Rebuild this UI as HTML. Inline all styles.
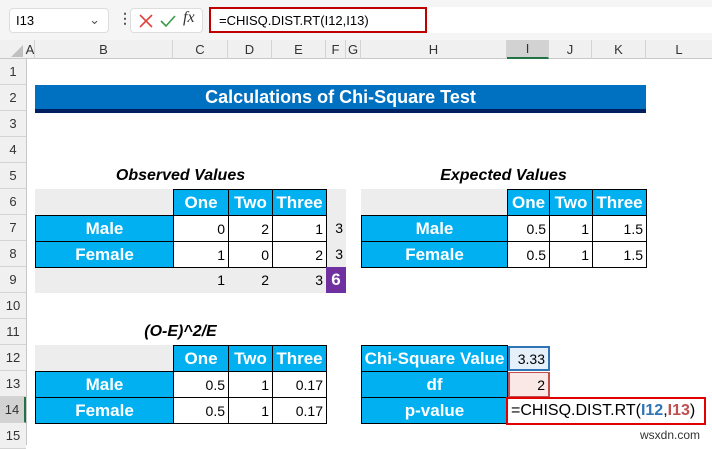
<!DOCTYPE html>
<html><head><meta charset="utf-8"><style>
*{margin:0;padding:0;box-sizing:border-box}
body{width:712px;height:445px;overflow:hidden;background:#fff;font-family:"Liberation Sans",Arial,sans-serif;position:relative}
.a{position:absolute}
.c{position:absolute;display:flex;align-items:center;font-size:14px;color:#000;white-space:nowrap}
.r{justify-content:flex-end;padding-right:3px}
.m{justify-content:center}
.bl{background:#00b0f0;color:#fff;font-weight:bold;font-size:17px}
.bd{border:1px solid #000}
.g{background:#ededed}
.hd{position:absolute;top:40px;height:19px;display:flex;align-items:center;justify-content:center;font-size:13px;color:#333;border-right:1px solid #d4d4d4}
.rh{position:absolute;left:0;width:26px;display:flex;align-items:center;justify-content:center;font-size:13px;color:#333;border-bottom:1px solid #d4d4d4;background:#f0f0f0}
.t{font-weight:bold;font-style:italic;font-size:16px;justify-content:center}
</style></head><body>
<div class="a" style="left:0;top:0;width:712px;height:40px;background:#f5f5f5"></div>
<div class="a" style="left:9px;top:8px;width:100px;height:25px;background:#fff;border:1px solid #ddd;border-radius:4px;font-size:13px;padding:4px 6px">I13<span style="position:absolute;right:8px;top:3px;color:#555">&#8964;</span></div>
<div class="a" style="left:118px;top:10px;font-size:14px;color:#555;font-weight:bold">&#8942;</div>
<div class="a" style="left:130px;top:8px;width:73px;height:25px;background:#fff;border:1px solid #ddd;border-radius:4px"></div>
<svg class="a" style="left:138px;top:13px" width="16" height="16"><path d="M2 2L14 14M14 2L2 14" stroke="#e0443e" stroke-width="1.6"/></svg>
<svg class="a" style="left:160px;top:13px" width="16" height="16"><path d="M1 8L6 13L15 3" stroke="#3a9a4a" stroke-width="1.6" fill="none"/></svg>
<div class="a" style="left:183px;top:9px;font-family:'Liberation Serif',serif;font-style:italic;font-size:16px;color:#333">fx</div>
<div class="a" style="left:209px;top:7px;width:503px;height:26px;background:#fff"></div>
<div class="a" style="left:209px;top:7px;width:218px;height:26px;border:2px solid #c00000;font-size:13px;padding:4px 8px">=CHISQ.DIST.RT(I12,I13)</div>
<div class="a" style="left:0;top:40px;width:712px;height:19px;background:#f0f0f0;border-bottom:1px solid #c8c8c8"></div>
<svg class="a" style="left:10px;top:44px" width="14" height="14"><path d="M13 1L13 13L1 13Z" fill="#c0c0c0"/></svg>
<div class="hd" style="left:26px;width:9px">A</div>
<div class="hd" style="left:35px;width:138px">B</div>
<div class="hd" style="left:173px;width:55px">C</div>
<div class="hd" style="left:228px;width:44px">D</div>
<div class="hd" style="left:272px;width:54px">E</div>
<div class="hd" style="left:326px;width:20px">F</div>
<div class="hd" style="left:346px;width:15px">G</div>
<div class="hd" style="left:361px;width:146px">H</div>
<div class="hd" style="left:507px;width:42px;background:#d2d2d2;border-bottom:2px solid #217346;height:19px">I</div>
<div class="hd" style="left:549px;width:43px">J</div>
<div class="hd" style="left:592px;width:54px">K</div>
<div class="hd" style="left:646px;width:66px;border-right:none">L</div>
<div class="a" style="left:26px;top:59px;width:1px;height:386px;background:#c8c8c8"></div>
<div class="rh" style="top:59px;height:26px">1</div><div class="rh" style="top:85px;height:26px">2</div><div class="rh" style="top:111px;height:26px">3</div><div class="rh" style="top:137px;height:26px">4</div><div class="rh" style="top:163px;height:26px">5</div><div class="rh" style="top:189px;height:26px">6</div><div class="rh" style="top:215px;height:26px">7</div><div class="rh" style="top:241px;height:26px">8</div><div class="rh" style="top:267px;height:26px">9</div><div class="rh" style="top:293px;height:26px">10</div><div class="rh" style="top:319px;height:26px">11</div><div class="rh" style="top:345px;height:26px">12</div><div class="rh" style="top:371px;height:26px">13</div><div class="rh" style="top:397px;height:26px;background:#d2d2d2;border-right:2px solid #217346">14</div><div class="rh" style="top:423px;height:26px">15</div>
<div class="c m" style="left:35px;top:85px;width:611px;height:28px;background:#0070c0;border-bottom:4px solid #002060;color:#fff;font-weight:bold;font-size:18px">Calculations of Chi-Square Test</div>
<div class="c t" style="left:35px;top:163px;width:291px;height:26px">Observed Values</div>
<div class="a g" style="left:35px;top:189px;width:311px;height:104px"></div>
<div class="c m bl bd" style="left:173px;top:189px;width:56px;height:27px">One</div>
<div class="c m bl bd" style="left:228px;top:189px;width:45px;height:27px">Two</div>
<div class="c m bl bd" style="left:272px;top:189px;width:55px;height:27px">Three</div>
<div class="c m bl bd" style="left:35px;top:215px;width:139px;height:27px">Male</div>
<div class="c m bl bd" style="left:35px;top:241px;width:139px;height:27px">Female</div>
<div class="c r bd" style="left:173px;top:215px;width:56px;height:27px;background:#fff">0</div>
<div class="c r bd" style="left:228px;top:215px;width:45px;height:27px;background:#fff">2</div>
<div class="c r bd" style="left:272px;top:215px;width:55px;height:27px;background:#fff">1</div>
<div class="c r bd" style="left:173px;top:241px;width:56px;height:27px;background:#fff">1</div>
<div class="c r bd" style="left:228px;top:241px;width:45px;height:27px;background:#fff">0</div>
<div class="c r bd" style="left:272px;top:241px;width:55px;height:27px;background:#fff">2</div>
<div class="c r" style="left:326px;top:215px;width:20px;height:26px">3</div>
<div class="c r" style="left:326px;top:241px;width:20px;height:26px">3</div>
<div class="c r" style="left:173px;top:267px;width:55px;height:26px">1</div>
<div class="c r" style="left:228px;top:267px;width:44px;height:26px">2</div>
<div class="c r" style="left:272px;top:267px;width:54px;height:26px">3</div>
<div class="c m" style="left:326px;top:267px;width:20px;height:26px;background:#7030a0;color:#fff;font-weight:bold;font-size:17px">6</div>
<div class="c t" style="left:361px;top:163px;width:285px;height:26px">Expected Values</div>
<div class="a g" style="left:361px;top:189px;width:146px;height:26px"></div>
<div class="c m bl bd" style="left:507px;top:189px;width:43px;height:27px">One</div>
<div class="c m bl bd" style="left:549px;top:189px;width:44px;height:27px">Two</div>
<div class="c m bl bd" style="left:592px;top:189px;width:55px;height:27px">Three</div>
<div class="c m bl bd" style="left:361px;top:215px;width:147px;height:27px">Male</div>
<div class="c m bl bd" style="left:361px;top:241px;width:147px;height:27px">Female</div>
<div class="c r bd" style="left:507px;top:215px;width:43px;height:27px">0.5</div>
<div class="c r bd" style="left:549px;top:215px;width:44px;height:27px">1</div>
<div class="c r bd" style="left:592px;top:215px;width:55px;height:27px">1.5</div>
<div class="c r bd" style="left:507px;top:241px;width:43px;height:27px">0.5</div>
<div class="c r bd" style="left:549px;top:241px;width:44px;height:27px">1</div>
<div class="c r bd" style="left:592px;top:241px;width:55px;height:27px">1.5</div>
<div class="c t" style="left:35px;top:319px;width:291px;height:26px">(O-E)^2/E</div>
<div class="a g" style="left:35px;top:345px;width:138px;height:26px"></div>
<div class="c m bl bd" style="left:173px;top:345px;width:56px;height:27px">One</div>
<div class="c m bl bd" style="left:228px;top:345px;width:45px;height:27px">Two</div>
<div class="c m bl bd" style="left:272px;top:345px;width:55px;height:27px">Three</div>
<div class="c m bl bd" style="left:35px;top:371px;width:139px;height:27px">Male</div>
<div class="c m bl bd" style="left:35px;top:397px;width:139px;height:27px">Female</div>
<div class="c r bd" style="left:173px;top:371px;width:56px;height:27px">0.5</div>
<div class="c r bd" style="left:228px;top:371px;width:45px;height:27px">1</div>
<div class="c r bd" style="left:272px;top:371px;width:55px;height:27px">0.17</div>
<div class="c r bd" style="left:173px;top:397px;width:56px;height:27px">0.5</div>
<div class="c r bd" style="left:228px;top:397px;width:45px;height:27px">1</div>
<div class="c r bd" style="left:272px;top:397px;width:55px;height:27px">0.17</div>
<div class="c m bl bd" style="left:361px;top:345px;width:147px;height:27px">Chi-Square Value</div>
<div class="c m bl bd" style="left:361px;top:371px;width:147px;height:27px">df</div>
<div class="c m bl bd" style="left:361px;top:397px;width:147px;height:27px">p-value</div>
<div class="c r" style="left:508px;top:346px;width:42px;height:25px;background:#e6f0fa;border:2px solid #2f75b5">3.33</div>
<div class="c r" style="left:508px;top:372px;width:42px;height:25px;background:#fae8e6;border:1px solid #c0504d;border-width:1px 2px">2</div>
<div class="c" style="left:506px;top:397px;width:200px;height:28px;background:#fff;border:2px solid #e00000;font-size:16px;padding-left:3px">=CHISQ.DIST.RT(<b style="color:#2f75b5">I12</b>,<b style="color:#c0504d">I13</b>)</div>
<div class="a" style="left:640px;top:428px;font-size:12px;color:#333">wsxdn.com</div>
</body></html>
